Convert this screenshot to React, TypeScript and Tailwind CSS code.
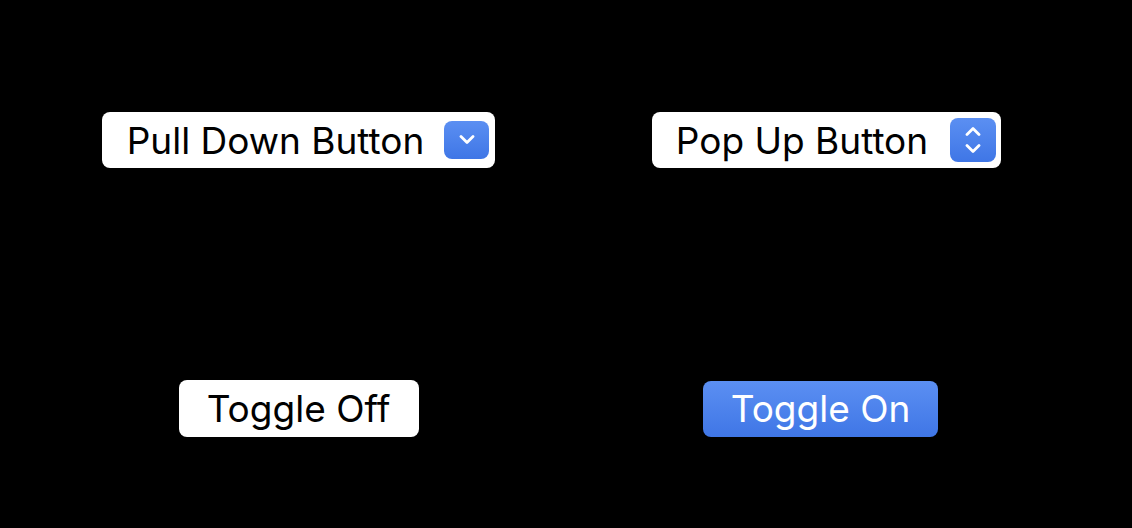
import { ReactNode } from "react";

const font = { fontFamily: "Inter, 'Noto Sans', sans-serif" };

function Chevron({ up = false }: { up?: boolean }) {
  return (
    <svg width="16" height="10" viewBox="0 0 16 10" fill="none">
      <path
        d={up ? "M2 8.5 L8 2.5 L14 8.5" : "M2 1.5 L8 7.5 L14 1.5"}
        stroke="white"
        strokeWidth="2.8"
        strokeLinecap="round"
        strokeLinejoin="round"
      />
    </svg>
  );
}

function MenuButton({ label, indicator, className = "" }: { label: string; indicator: ReactNode; className?: string }) {
  return (
    <div className={`flex h-[56px] items-center rounded-[8px] bg-white pl-[25px] pr-[6px] ${className}`}>
      <span className="text-[37px] leading-none text-black">{label}</span>
      {indicator}
    </div>
  );
}

export default function App() {
  return (
    <div className="h-[528px] w-[1132px] bg-black" style={font}>
      <div className="grid grid-cols-[525px_525px] grid-rows-[56px_57px] gap-y-[212px] pl-[36px] pt-[112px] justify-items-center items-center">
        <MenuButton
          label="Pull Down Button"
          indicator={
            <div className="ml-[20px] flex h-[38px] w-[45px] items-center justify-center rounded-[8px] bg-gradient-to-b from-[#5b8ff2] to-[#3f76e6]">
              <Chevron />
            </div>
          }
        />
        <MenuButton
          label="Pop Up Button"
          className="ml-[6px] !pl-[24px] !pr-[5px]"
          indicator={
            <div className="ml-[22px] flex h-[44px] w-[46px] flex-col items-center justify-center gap-[8px] rounded-[8px] bg-gradient-to-b from-[#5b8ff2] to-[#3f76e6]">
              <Chevron up />
              <Chevron />
            </div>
          }
        />
        <div className="flex h-[57px] w-[240px] items-center justify-center rounded-[8px] bg-white text-[37px] leading-none text-black">
          Toggle Off
        </div>
        <div className="mr-[6px] flex h-[56px] w-[235px] items-center justify-center rounded-[8px] bg-gradient-to-b from-[#5b8ff2] to-[#3f76e6] text-[37px] leading-none text-white">
          Toggle On
        </div>
      </div>
    </div>
  );
}
